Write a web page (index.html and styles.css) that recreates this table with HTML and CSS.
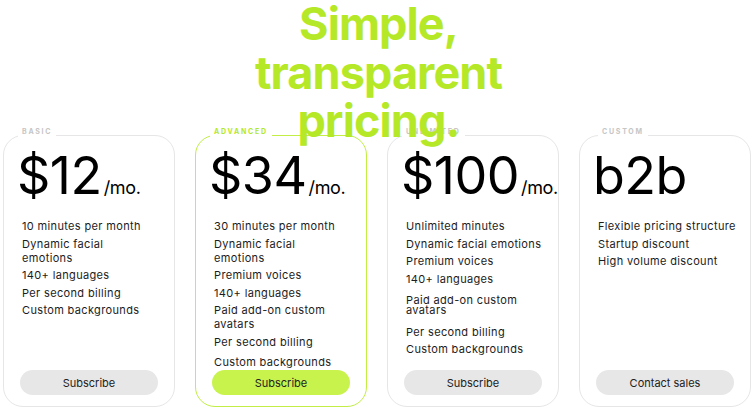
FILE: index.html
```html
<!DOCTYPE html>
<html lang="en">
<head>
<meta charset="utf-8">
<title>Pricing</title>
<link rel="stylesheet" href="styles.css">
</head>
<body>
<main class="page">
  <h1 class="title">Simple,<br>transparent<br>pricing.</h1>
  <section class="plans">
    <article class="plan">
      <span class="plan-label">BASIC</span>
      <div class="price">$12<span class="per">/mo.</span></div>
      <ul class="features">
        <li>10 minutes per month</li>
        <li>Dynamic facial<br>emotions</li>
        <li>140+ languages</li>
        <li>Per second billing</li>
        <li>Custom backgrounds</li>
      </ul>
      <button class="btn">Subscribe</button>
    </article>
    <article class="plan plan-featured">
      <span class="plan-label">ADVANCED</span>
      <div class="price">$34<span class="per">/mo.</span></div>
      <ul class="features">
        <li>30 minutes per month</li>
        <li>Dynamic facial<br>emotions</li>
        <li>Premium voices</li>
        <li>140+ languages</li>
        <li>Paid add-on custom<br>avatars</li>
        <li>Per second billing</li>
        <li class="more">Custom backgrounds</li>
      </ul>
      <button class="btn btn-lime">Subscribe</button>
    </article>
    <article class="plan">
      <span class="plan-label">UNLIMITED</span>
      <div class="price">$100<span class="per">/mo.</span></div>
      <ul class="features">
        <li>Unlimited minutes</li>
        <li>Dynamic facial emotions</li>
        <li>Premium voices</li>
        <li>140+ languages</li>
        <li class="more tight">Paid add-on custom<br>avatars</li>
        <li class="more">Per second billing</li>
        <li>Custom backgrounds</li>
      </ul>
      <button class="btn">Subscribe</button>
    </article>
    <article class="plan">
      <span class="plan-label plan-label-wide">CUSTOM</span>
      <div class="price">b2b</div>
      <ul class="features">
        <li>Flexible pricing structure</li>
        <li>Startup discount</li>
        <li>High volume discount</li>
      </ul>
      <button class="btn">Contact sales</button>
    </article>
  </section>
</main>
</body>
</html>
```
FILE: styles.css
```css
* { box-sizing: border-box; }

html, body {
  margin: 0;
  padding: 0;
  background: #ffffff;
}

body {
  font-family: Inter, "Liberation Sans", sans-serif;
  color: #1c1c1c;
}

.page {
  width: 754px;
  height: 408px;
  overflow: hidden;
}

.title {
  position: relative;
  z-index: 2;
  margin: 0;
  padding-left: 3px;
  text-align: center;
  font-size: 45px;
  line-height: 48.5px;
  font-weight: 700;
  letter-spacing: -0.02em;
  color: #b5e827;
}

.plans {
  display: grid;
  grid-template-columns: repeat(4, minmax(0, 1fr));
  column-gap: 20px;
  padding: 0 3px;
  margin-top: -10.5px;
}

.plan {
  position: relative;
  height: 272px;
  border: 1px solid #e6e6e6;
  border-radius: 20px;
  padding: 16px 16px 11px;
  display: flex;
  flex-direction: column;
  background: #ffffff;
}

.plan-featured {
  border-color: #c2ee45;
}

.plan-label {
  position: absolute;
  top: -9px;
  left: 14px;
  padding: 0 4px;
  background: #ffffff;
  font-size: 7px;
  line-height: 10px;
  font-weight: 700;
  letter-spacing: 0.25em;
  color: #c6c6c6;
}

.plan-label-wide {
  left: 18px;
}

.plan-featured .plan-label {
  color: #b5e827;
}

.price {
  margin-left: -3px;
  font-size: 52px;
  line-height: 48px;
  font-weight: 400;
  letter-spacing: -0.01em;
  color: #000000;
  white-space: nowrap;
}

.per {
  font-size: 18px;
  line-height: 1;
  letter-spacing: -0.02em;
  margin-left: 2px;
}

.features {
  list-style: none;
  margin: 19px 0 0;
  padding: 0 0 0 2px;
  display: flex;
  flex-direction: column;
  gap: 3.5px;
  font-size: 11px;
  line-height: 14px;
  letter-spacing: 0.35px;
  white-space: nowrap;
}

.features .more {
  margin-top: 3px;
}

.features .tight {
  line-height: 10px;
  padding: 3px 0;
}

.btn {
  margin-top: auto;
  width: 100%;
  height: 25px;
  flex-shrink: 0;
  border: 0;
  border-radius: 13px;
  background: #e7e7e7;
  font-family: Inter, "Liberation Sans", sans-serif;
  font-size: 11px;
  color: #222222;
  padding: 0;
}

.btn-lime {
  background: #c8f34d;
}
```
